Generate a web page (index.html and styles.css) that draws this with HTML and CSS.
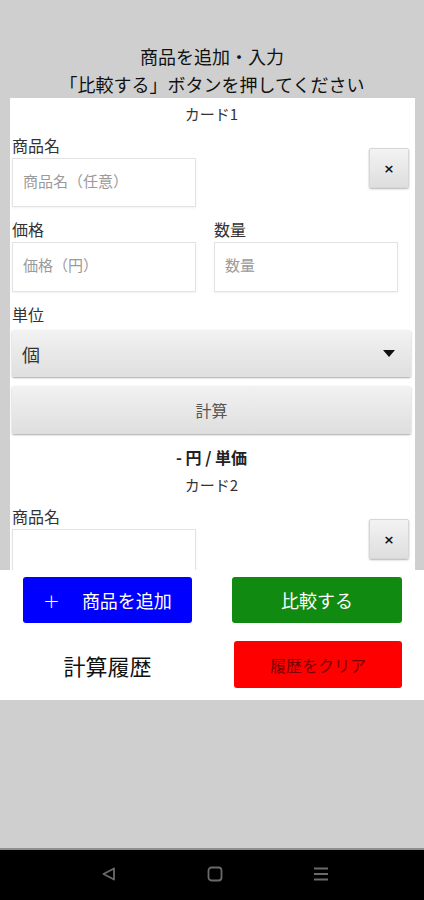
FILE: index.html
```html
<!DOCTYPE html>
<html lang="ja">
<head>
<meta charset="utf-8">
<title>比較</title>
<link rel="stylesheet" href="styles.css">
</head>
<body>
<div class="screen">
  <header class="header">
    <div>商品を追加・入力</div>
    <div>「比較する」ボタンを押してください</div>
  </header>

  <main class="scroll">
    <section class="card">
      <div class="card-title">カード1</div>
      <div class="name-row">
        <div class="field name-field">
          <div class="label">商品名</div>
          <div class="input placeholder">商品名（任意）</div>
        </div>
        <button class="remove">×</button>
      </div>
      <div class="pair">
        <div class="field">
          <div class="label">価格</div>
          <div class="input placeholder">価格（円）</div>
        </div>
        <div class="field">
          <div class="label">数量</div>
          <div class="input placeholder">数量</div>
        </div>
      </div>
      <div class="field">
        <div class="label">単位</div>
        <div class="select"><span>個</span><span class="caret"></span></div>
      </div>
      <button class="calc">計算</button>
      <div class="result">- 円 / 単価</div>
    </section>

    <section class="card">
      <div class="card-title">カード2</div>
      <div class="name-row">
        <div class="field name-field">
          <div class="label">商品名</div>
          <div class="input"></div>
        </div>
        <button class="remove">×</button>
      </div>
    </section>
  </main>

  <section class="panel">
    <button class="btn blue"><span class="plus">+</span>商品を追加</button>
    <button class="btn green">比較する</button>
    <div class="history">計算履歴</div>
    <button class="btn red">履歴をクリア</button>
  </section>

  <div class="spacer"></div>

  <nav class="navbar">
    <svg class="nav-icon" width="16" height="16" viewBox="0 0 16 16"><path d="M13 2.5 L2.5 8 L13 13.5 Z" fill="none" stroke="#6a6a6a" stroke-width="1.8" stroke-linejoin="round"/></svg>
    <svg class="nav-icon" width="16" height="16" viewBox="0 0 16 16"><rect x="1.5" y="1.5" width="13" height="13" rx="3" fill="none" stroke="#6a6a6a" stroke-width="1.8"/></svg>
    <svg class="nav-icon" width="16" height="16" viewBox="0 0 16 16"><path d="M1 2.5 H15 M1 8 H15 M1 13.5 H15" stroke="#6a6a6a" stroke-width="1.8"/></svg>
  </nav>
</div>
</body>
</html>
```

FILE: styles.css
```css
* { box-sizing: border-box; }

html, body {
  margin: 0;
  padding: 0;
  background: #cfcfcf;
  font-family: "Noto Sans CJK JP", "Noto Sans", sans-serif;
  color: #222;
}

.screen {
  width: 424px;
  height: 900px;
  display: flex;
  flex-direction: column;
  overflow: hidden;
}

.header {
  height: 98px;
  padding-top: 42px;
  text-align: center;
  font-size: 18px;
  line-height: 28px;
  color: #111;
  flex: none;
}

.scroll {
  margin: 0 9px 0 10px;
  height: 472px;
  flex: none;
  background: #fff;
  overflow: hidden;
  padding: 0 4px 0 2px;
}

.card-title {
  margin-top: 4px;
  text-align: center;
  font-size: 15px;
  line-height: 24px;
  color: #333;
}

.name-row {
  display: flex;
  justify-content: space-between;
  align-items: flex-start;
  margin-top: 8px;
}

.field {
  display: flex;
  flex-direction: column;
}

.name-field { width: 184px; }

.label {
  font-size: 16px;
  line-height: 22px;
  color: #333;
  margin-bottom: 2px;
}

.input {
  height: 49px;
  border: 1px solid #e3e3e3;
  box-shadow: 0 1px 2px rgba(0,0,0,0.06);
  background: #fff;
  padding: 0 10px;
  font-size: 15px;
  line-height: 44px;
}

.placeholder { color: #9a9a9a; }

.remove {
  width: 40px;
  height: 40px;
  margin-top: 14px;
  margin-right: 2px;
  border: 1px solid #d6d6d6;
  border-radius: 2px;
  background: linear-gradient(#f3f3f3, #dedede);
  box-shadow: 0 1px 2px rgba(0,0,0,0.3);
  font-family: "DejaVu Sans", sans-serif;
  font-size: 13px;
  font-weight: bold;
  color: #111;
  padding: 0;
}

.pair {
  display: grid;
  grid-template-columns: 184px 184px;
  column-gap: 18px;
  margin-top: 11px;
}

.pair .input { height: 50px; }

.pair + .field { margin-top: 11px; }

.pair + .field .label { margin-bottom: 5px; }

.select {
  height: 47px;
  display: flex;
  align-items: center;
  justify-content: space-between;
  padding: 0 16px 0 10px;
  background: linear-gradient(#f2f2f2, #dfdfdf);
  border-radius: 2px;
  box-shadow: 0 1px 2px rgba(0,0,0,0.35);
  font-size: 18px;
  color: #333;
}

.caret {
  width: 0;
  height: 0;
  border-left: 6px solid transparent;
  border-right: 6px solid transparent;
  border-top: 7px solid #111;
}

.calc {
  display: block;
  width: 100%;
  height: 48px;
  margin-top: 9px;
  border: none;
  border-radius: 2px;
  background: linear-gradient(#f2f2f2, #dedede);
  box-shadow: 0 1px 2px rgba(0,0,0,0.35);
  font-family: inherit;
  font-size: 16px;
  color: #555;
}

.result {
  margin-top: 11px;
  text-align: center;
  font-size: 16px;
  font-weight: bold;
  line-height: 24px;
  color: #222;
}

.panel {
  height: 130px;
  flex: none;
  background: #fff;
  display: grid;
  grid-template-columns: 169px 170px;
  grid-template-rows: 46px 47px;
  column-gap: 40px;
  row-gap: 18px;
  padding: 7px 0 0 23px;
}

.btn {
  border: none;
  border-radius: 3px;
  font-family: inherit;
  font-size: 18px;
  color: #fff;
  padding: 0;
}

.blue { background: #0000ff; }

.plus {
  font-family: "DejaVu Sans", sans-serif;
  font-weight: 300;
  font-size: 20px;
  margin-right: 22px;
}

.green { background: #118a11; }

.red {
  background: #ff0000;
  color: #7a0000;
  font-size: 16px;
  margin-left: 2px;
}

.history {
  display: flex;
  align-items: center;
  justify-content: center;
  font-size: 22px;
  color: #111;
}

.spacer {
  height: 148px;
  flex: none;
  background: #cfcfcf;
}

.navbar {
  flex: none;
  height: 52px;
  border-top: 2px solid #8e8e8e;
  background: #000;
  display: flex;
  align-items: center;
  justify-content: center;
  gap: 90px;
  padding: 0 0 2px 6px;
}

.nav-icon { display: block; }
```
